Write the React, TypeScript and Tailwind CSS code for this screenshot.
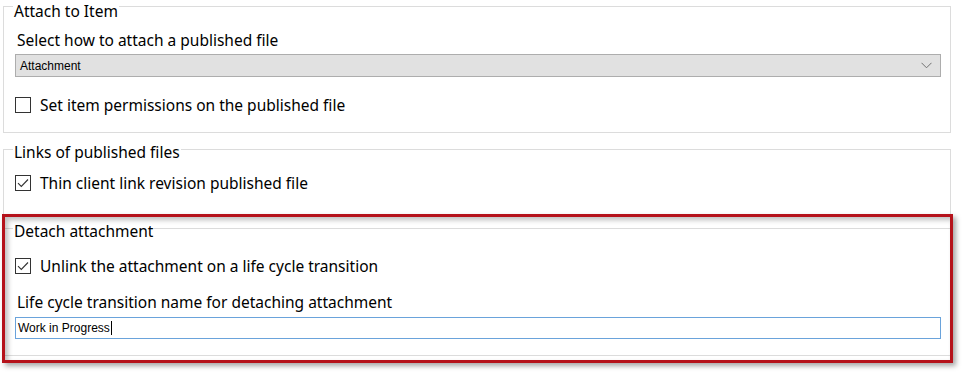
import React from "react";

const labelFont = { fontFamily: '"Noto Sans", "Open Sans", Arial, sans-serif' };
const smallFont = { fontFamily: '"Liberation Sans", Arial, sans-serif' };

function Legend({ children, top = false }: { children: React.ReactNode; top?: boolean }) {
  return (
    <div
      className={
        top
          ? "-mt-[5px] ml-[9px] w-fit bg-white px-[1px] text-[15.5px] leading-[18px] text-black"
          : "-mt-[7px] ml-[9px] w-fit bg-white px-[1px] text-[15.5px] leading-[18px] text-black"
      }
    >
      {children}
    </div>
  );
}

function CheckBox({ checked }: { checked: boolean }) {
  return (
    <div className="flex h-[16px] w-[16px] shrink-0 items-center justify-center border border-[#333333] bg-white">
      {checked && (
        <svg width="14" height="14" viewBox="0 0 14 14" fill="none">
          <path d="M2 7.2 L5.3 10.5 L12 3.5" stroke="#333333" strokeWidth="1.1" />
        </svg>
      )}
    </div>
  );
}

function CheckRow({ checked, label }: { checked: boolean; label: string }) {
  return (
    <div className="flex h-[18px] items-center">
      <CheckBox checked={checked} />
      <span className="ml-[9px] text-[15.5px] leading-[18px] text-black">{label}</span>
    </div>
  );
}

export default function App() {
  return (
    <div className="relative h-[372px] w-[963px] overflow-hidden bg-white" style={labelFont}>
      <div className="pl-[3px] pr-[12px] pt-[6px]">
        {/* Group 1 */}
        <div className="h-[127px] border border-[#dcdcdc] pl-[11px] pr-[9px]">
          <div className="-ml-[11px]">
            <Legend top>Attach to Item</Legend>
          </div>
          <div className="ml-[2px] mt-[11px] text-[15.5px] leading-[18px] text-black">
            Select how to attach a published file
          </div>
          <div className="mt-[5px] flex h-[23px] items-center justify-between border border-[#adadad] bg-[#e1e1e1] pl-[4px] pr-[8px]">
            <span className="text-[12px] leading-[14px] text-black" style={smallFont}>
              Attachment
            </span>
            <svg width="11" height="7" viewBox="0 0 11 7" fill="none">
              <path d="M0.5 0.8 L5.5 5.8 L10.5 0.8" stroke="#707070" strokeWidth="1" />
            </svg>
          </div>
          <div className="mt-[19px]">
            <CheckRow checked={false} label="Set item permissions on the published file" />
          </div>
        </div>

        {/* Group 2 */}
        <div className="mt-[16px] h-[68px] border border-[#dcdcdc] pl-[11px] pr-[9px]">
          <div className="-ml-[11px]">
            <Legend>Links of published files</Legend>
          </div>
          <div className="mt-[13px]">
            <CheckRow checked={true} label="Thin client link revision published file" />
          </div>
        </div>

        {/* Group 3 */}
        <div className="mt-[11px] h-[128px] border border-[#dcdcdc] pl-[11px] pr-[9px]">
          <div className="-ml-[11px]">
            <Legend>Detach attachment</Legend>
          </div>
          <div className="mt-[17px]">
            <CheckRow checked={true} label="Unlink the attachment on a life cycle transition" />
          </div>
          <div className="ml-[2px] mt-[18px] text-[15.5px] leading-[18px] text-black">
            Life cycle transition name for detaching attachment
          </div>
          <div className="mt-[6px] flex h-[22px] items-center border border-[#6aa3db] bg-white pl-[2px]">
            <span className="text-[12px] leading-[14px] text-black" style={smallFont}>
              Work in Progress
            </span>
            <span className="ml-[1px] h-[14px] w-[1px] bg-black" />
          </div>
        </div>
      </div>

      {/* Red highlight annotation */}
      <div className="pointer-events-none absolute left-[2px] top-[214px] h-[149px] w-[951px] border-[3px] border-[#b5121b] shadow-[3px_3px_5px_rgba(0,0,0,0.35),inset_3px_3px_5px_rgba(0,0,0,0.25)]" />
    </div>
  );
}
